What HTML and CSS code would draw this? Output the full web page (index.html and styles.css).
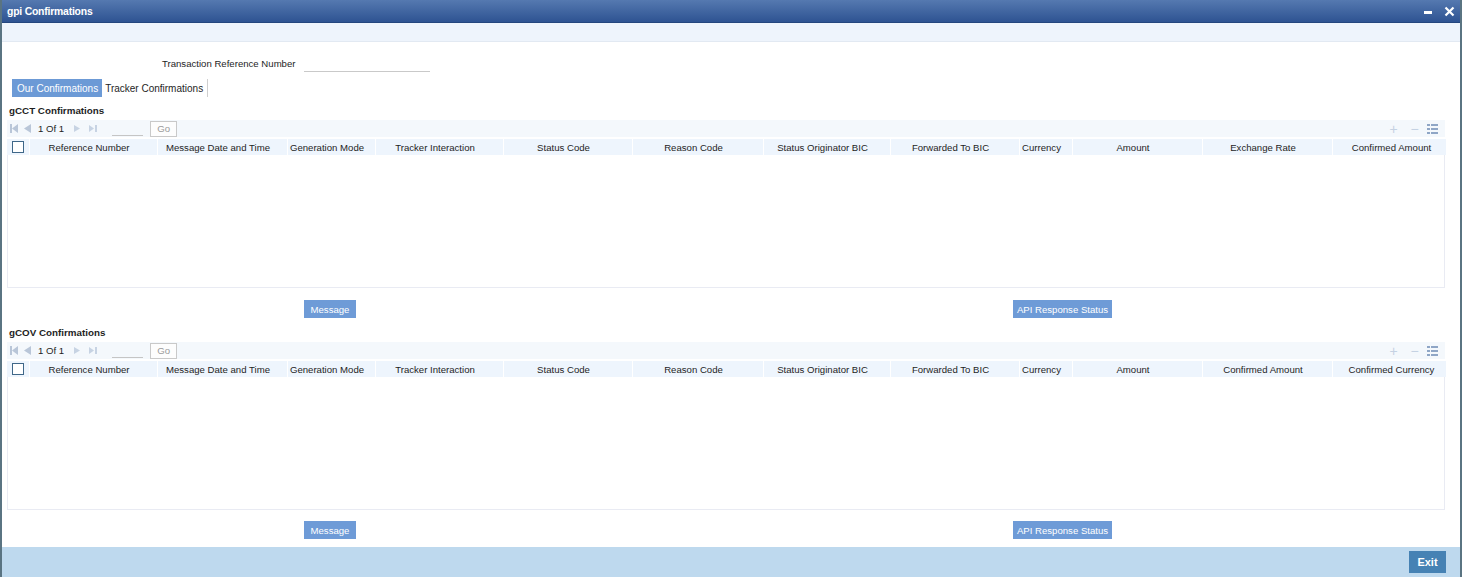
FILE: index.html
```html
<!DOCTYPE html>
<html>
<head>
<meta charset="utf-8">
<link rel="stylesheet" href="styles.css">
</head>
<body>
<div class="window">
  <div class="titlebar">
    <span class="title">gpi Confirmations</span>
    <span class="winctl">
      <span class="minbtn"></span>
      <svg class="closebtn" width="11" height="11" viewBox="0 0 11 11"><path d="M1.5 1.5 L9.5 9.5 M9.5 1.5 L1.5 9.5" stroke="#fff" stroke-width="2.2"/></svg>
    </span>
  </div>
  <div class="subbar"></div>
  <div class="content">
    <div class="field">
      <span class="flabel">Transaction Reference Number</span>
      <span class="finput"></span>
    </div>
    <div class="tabs">
      <span class="tab active">Our Confirmations</span>
      <span class="tab">Tracker Confirmations</span>
    </div>

    <div class="section first">
      <div class="sectitle">gCCT Confirmations</div>
      <div class="pager">
        <div class="pgleft">
          <svg class="pgico" width="8" height="9" viewBox="0 0 8 9"><rect x="0" y="0" width="2" height="9" fill="#b9c6d8"/><path d="M8 0 L2 4.5 L8 9 Z" fill="#b9c6d8"/></svg>
          <svg class="pgico" width="8" height="9" viewBox="0 0 8 9"><path d="M8 0 L1 4.5 L8 9 Z" fill="#b9c6d8"/></svg>
          <span class="pgtext">1 Of 1</span>
          <svg class="pgico nx" width="7" height="9" viewBox="0 0 7 9"><path d="M0 1 L6 4.5 L0 8 Z" fill="#c7d3e3"/></svg>
          <svg class="pgico" width="8" height="9" viewBox="0 0 8 9"><path d="M0 1 L5 4.5 L0 8 Z" fill="#c7d3e3"/><rect x="6" y="1" width="2" height="7" fill="#c7d3e3"/></svg>
          <span class="pginput"></span>
          <span class="gobtn">Go</span>
        </div>
        <div class="pgright">
          <span class="tool plus">+</span>
          <span class="tool minus">−</span>
          <svg class="listico" width="11" height="10" viewBox="0 0 11 10"><g fill="#8fa6c6"><rect x="0" y="0" width="3" height="2"/><rect x="4" y="0" width="7" height="2"/><rect x="0" y="4" width="3" height="2"/><rect x="4" y="4" width="7" height="2"/><rect x="0" y="8" width="3" height="2"/><rect x="4" y="8" width="7" height="2"/></g></svg>
        </div>
      </div>
      <div class="grid">
        <div class="ghead">
          <div class="gc chk"><span class="cbox"></span></div>
          <div class="gc">Reference Number</div>
          <div class="gc">Message Date and Time</div>
          <div class="gc">Generation Mode</div>
          <div class="gc">Tracker Interaction</div>
          <div class="gc">Status Code</div>
          <div class="gc">Reason Code</div>
          <div class="gc">Status Originator BIC</div>
          <div class="gc">Forwarded To BIC</div>
          <div class="gc">Currency</div>
          <div class="gc">Amount</div>
          <div class="gc">Exchange Rate</div>
          <div class="gc last">Confirmed Amount</div>
        </div>
        <div class="gbody"></div>
      </div>
      <div class="btnrow">
        <span class="btn msg">Message</span>
        <span class="btn api">API Response Status</span>
      </div>
    </div>

    <div class="section second">
      <div class="sectitle">gCOV Confirmations</div>
      <div class="pager">
        <div class="pgleft">
          <svg class="pgico" width="8" height="9" viewBox="0 0 8 9"><rect x="0" y="0" width="2" height="9" fill="#b9c6d8"/><path d="M8 0 L2 4.5 L8 9 Z" fill="#b9c6d8"/></svg>
          <svg class="pgico" width="8" height="9" viewBox="0 0 8 9"><path d="M8 0 L1 4.5 L8 9 Z" fill="#b9c6d8"/></svg>
          <span class="pgtext">1 Of 1</span>
          <svg class="pgico nx" width="7" height="9" viewBox="0 0 7 9"><path d="M0 1 L6 4.5 L0 8 Z" fill="#c7d3e3"/></svg>
          <svg class="pgico" width="8" height="9" viewBox="0 0 8 9"><path d="M0 1 L5 4.5 L0 8 Z" fill="#c7d3e3"/><rect x="6" y="1" width="2" height="7" fill="#c7d3e3"/></svg>
          <span class="pginput"></span>
          <span class="gobtn">Go</span>
        </div>
        <div class="pgright">
          <span class="tool plus">+</span>
          <span class="tool minus">−</span>
          <svg class="listico" width="11" height="10" viewBox="0 0 11 10"><g fill="#8fa6c6"><rect x="0" y="0" width="3" height="2"/><rect x="4" y="0" width="7" height="2"/><rect x="0" y="4" width="3" height="2"/><rect x="4" y="4" width="7" height="2"/><rect x="0" y="8" width="3" height="2"/><rect x="4" y="8" width="7" height="2"/></g></svg>
        </div>
      </div>
      <div class="grid">
        <div class="ghead">
          <div class="gc chk"><span class="cbox"></span></div>
          <div class="gc">Reference Number</div>
          <div class="gc">Message Date and Time</div>
          <div class="gc">Generation Mode</div>
          <div class="gc">Tracker Interaction</div>
          <div class="gc">Status Code</div>
          <div class="gc">Reason Code</div>
          <div class="gc">Status Originator BIC</div>
          <div class="gc">Forwarded To BIC</div>
          <div class="gc">Currency</div>
          <div class="gc">Amount</div>
          <div class="gc">Confirmed Amount</div>
          <div class="gc last">Confirmed Currency</div>
        </div>
        <div class="gbody"></div>
      </div>
      <div class="btnrow">
        <span class="btn msg">Message</span>
        <span class="btn api">API Response Status</span>
      </div>
    </div>
  </div>
  <div class="footer">
    <span class="exit">Exit</span>
  </div>
</div>
</body>
</html>
```

FILE: styles.css
```css
* { box-sizing: border-box; }
html, body { margin: 0; padding: 0; }
body {
  font-family: "Liberation Sans", Arial, sans-serif;
  font-size: 9.6px;
  color: #1e1e1e;
  background: #fff;
  width: 1462px;
  height: 577px;
  overflow: hidden;
}
.window {
  height: 577px;
  display: flex;
  flex-direction: column;
  border-left: 2px solid #5a7482;
  border-right: 2px solid #5a7482;
}
.titlebar {
  height: 23px;
  flex: none;
  background: linear-gradient(#5579b0, #2e5392);
  display: flex;
  align-items: center;
  justify-content: space-between;
  padding: 0 5px 0 5px;
  border-bottom: 1px solid #24467e;
}
.title {
  color: #fff;
  font-weight: bold;
  font-size: 10.4px;
  letter-spacing: -0.2px;
}
.winctl { display: flex; align-items: center; gap: 12px; }
.minbtn { width: 8px; height: 3px; background: #fff; margin-top: 2px; }
.closebtn { display: block; }
.subbar {
  height: 19px;
  flex: none;
  background: #eef4fc;
  border-bottom: 1px solid #e2e9f2;
}
.content {
  flex: 1;
  padding: 0 13px 0 5px;
}
.field {
  display: flex;
  align-items: center;
  height: 20px;
  margin-top: 11px;
  padding-left: 155px;
}
.flabel { width: 142px; }
.finput {
  width: 126px;
  height: 18px;
  border-bottom: 1px solid #c9c9c9;
}
.tabs {
  display: flex;
  margin-top: 6px;
  margin-left: 5px;
  height: 18px;
  font-size: 10px;
}
.tab {
  display: flex;
  align-items: center;
  padding: 0 4px 0 3px;
  border-right: 1px solid #cfcfcf;
}
.tab.active {
  background: #6c9ad6;
  color: #fff;
  padding: 0 4px 0 5px;
  border-right: none;
}
.sectitle {
  font-weight: bold;
  font-size: 9.8px;
  height: 20px;
  padding-left: 2px;
  padding-top: 8px;
  line-height: 12px;
}
.second .sectitle { padding-top: 9px; height: 24px; }
.pager {
  margin-top: 3px;
  height: 17px;
  background: #f4f8fc;
  display: flex;
  align-items: center;
  justify-content: space-between;
  width: 1438px;
}
.second .pager { margin-top: 0; }
.pgleft { display: flex; align-items: center; padding-left: 3px; }
.pgico { display: block; margin-right: 5px; }
.pgtext { margin: 0 10px 0 2px; }
.pgico.nx { margin-right: 8px; }
.pginput {
  width: 31px;
  height: 14px;
  border-bottom: 1px solid #c5c5c5;
  margin-left: 10px;
  margin-right: 7px;
}
.gobtn {
  width: 27px;
  height: 16px;
  border: 1px solid #c9c9c9;
  color: #9a9a9a;
  background: #fdfdfd;
  display: flex;
  align-items: center;
  justify-content: center;
}
.pgright { display: flex; align-items: center; padding-right: 7px; }
.tool {
  color: #c5d2e3;
  font-size: 14px;
  width: 21px;
  text-align: center;
  line-height: 14px;
}
.listico { display: block; margin-left: 2px; }
.grid {
  margin-top: 2px;
  width: 1439px;
}
.ghead {
  display: grid;
  grid-template-columns: 22px 128px 130px 88px 128px 129px 131px 127px 129px 53px 130px 130px 1fr;
  height: 16px;
  background: #eef5fd;
}
.gc {
  display: flex;
  align-items: center;
  justify-content: center;
  border-left: 1px solid #fff;
  white-space: nowrap;
  overflow: hidden;
  padding-right: 9px;
}
.gc.last { padding-right: 0; padding-left: 4px; }
.gc:first-child { border-left: none; }
.gc.chk { justify-content: flex-start; padding-left: 5px; padding-right: 0; }
.cbox {
  width: 12px;
  height: 12px;
  border: 1px solid #3f6788;
  background: #fff;
}
.gbody {
  height: 133px;
  width: 1438px;
  border: 1px solid #e9ebf3;
  border-top: none;
}
.btnrow {
  display: flex;
  height: 30px;
  padding-top: 12px;
  padding-left: 297px;
}
.second .btnrow { padding-top: 11px; height: 29px; }
.btn {
  height: 18px;
  background: #6e9bd7;
  color: #fff;
  display: flex;
  align-items: center;
  justify-content: center;
}
.btn.msg { width: 52px; }
.btn.api { width: 99px; margin-left: 657px; }
.footer {
  height: 30px;
  flex: none;
  background: #bed9ee;
  display: flex;
  align-items: center;
  justify-content: flex-end;
  padding-right: 14px;
}
.exit {
  width: 37px;
  height: 22px;
  background: #4682b4;
  color: #fff;
  font-weight: bold;
  font-size: 11px;
  display: flex;
  align-items: center;
  justify-content: center;
}
```
